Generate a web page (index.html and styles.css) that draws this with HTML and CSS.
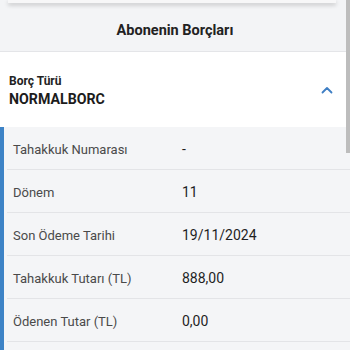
FILE: index.html
```html
<!DOCTYPE html>
<html lang="tr">
<head>
<meta charset="utf-8">
<link rel="stylesheet" href="styles.css">
</head>
<body>
<div class="page">
  <div class="top-card"></div>
  <div class="title">Abonenin Borçları</div>
  <div class="type">
    <div class="type-text">
      <div class="type-label">Borç Türü</div>
      <div class="type-value">NORMALBORC</div>
    </div>
    <svg class="chev" width="12" height="8" viewBox="0 0 12 8"><path d="M1.5 6.5 L6 2 L10.5 6.5" fill="none" stroke="#3f7fc4" stroke-width="1.8" stroke-linecap="round" stroke-linejoin="round"/></svg>
  </div>
  <div class="details">
    <div class="row"><span class="label">Tahakkuk Numarası</span><span class="value">-</span></div>
    <div class="row"><span class="label">Dönem</span><span class="value">11</span></div>
    <div class="row"><span class="label">Son Ödeme Tarihi</span><span class="value">19/11/2024</span></div>
    <div class="row"><span class="label">Tahakkuk Tutarı (TL)</span><span class="value">888,00</span></div>
    <div class="row"><span class="label">Ödenen Tutar (TL)</span><span class="value">0,00</span></div>
    <div class="row"><span class="label"></span><span class="value"></span></div>
  </div>
  <div class="scrollbar"></div>
</div>
</body>
</html>
```
FILE: styles.css
```css
html, body {
  margin: 0;
  padding: 0;
  background: #f3f4f6;
  font-family: Roboto, "Liberation Sans", sans-serif;
  overflow: hidden;
}
.page {
  position: relative;
  width: 350px;
  height: 350px;
  overflow: hidden;
  background: #f3f4f6;
}
.top-card {
  margin: 0 14px 0 8px;
  height: 3px;
  background: #f7f7f8;
  box-shadow: 0 2px 4px rgba(0,0,0,0.22);
}
.title {
  height: 42px;
  padding-top: 6px;
  display: flex;
  align-items: center;
  justify-content: center;
  font-size: 14.5px;
  font-weight: 700;
  color: #222;
  border-bottom: 1px solid #e4e5e8;
}
.type {
  height: 75px;
  background: #fff;
  display: flex;
  align-items: center;
  justify-content: space-between;
  padding: 0 17px 0 9px;
}
.type-text {
  padding-top: 2px;
}
.type-label {
  font-size: 12px;
  font-weight: 700;
  color: #222;
  line-height: 16px;
}
.type-value {
  font-size: 14.2px;
  font-weight: 700;
  color: #1c1c1c;
  line-height: 20px;
}
.details {
  border-left: 4px solid #3d83c6;
  background: #f4f5f7;
}
.row {
  height: 42px;
  padding-top: 2px;
  box-sizing: border-box;
  height: 43px;
  margin-left: 3px;
  border-bottom: 1px solid #e3e4e7;
  display: flex;
  align-items: center;
}
.label {
  width: 169px;
  padding-left: 6px;
  font-size: 13px;
  color: #4a4a4a;
}
.value {
  font-size: 14px;
  color: #1f1f1f;
}
.scrollbar {
  position: absolute;
  right: 0;
  top: 0;
  width: 4px;
  height: 153px;
  background: #bdbdbd;
}
```
